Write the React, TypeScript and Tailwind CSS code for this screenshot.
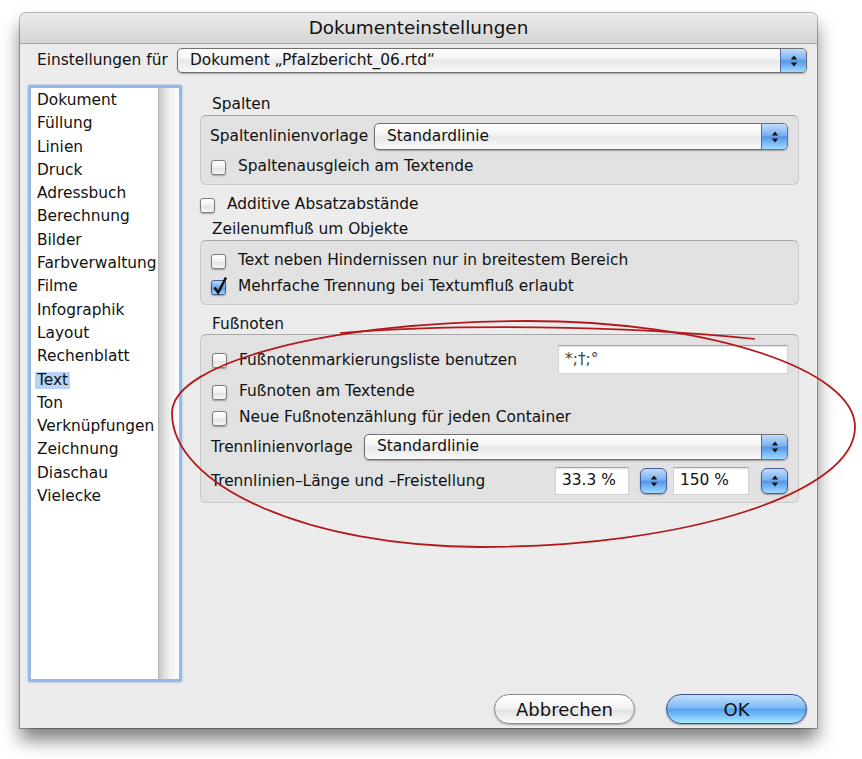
import React from "react";

const ITEMS = [
  "Dokument",
  "Füllung",
  "Linien",
  "Druck",
  "Adressbuch",
  "Berechnung",
  "Bilder",
  "Farbverwaltung",
  "Filme",
  "Infographik",
  "Layout",
  "Rechenblatt",
  "Text",
  "Ton",
  "Verknüpfungen",
  "Zeichnung",
  "Diaschau",
  "Vielecke",
];

function Arrows() {
  return (
    <svg width="8" height="14" viewBox="0 0 8 14">
      <path d="M4 1.5 L7.2 5.6 L0.8 5.6 Z" fill="#111" />
      <path d="M0.8 8.4 L7.2 8.4 L4 12.5 Z" fill="#111" />
    </svg>
  );
}

function Popup({ label, className }: { label: string; className: string }) {
  return (
    <div
      className={`flex overflow-hidden rounded-[5px] border border-[#707070] bg-[linear-gradient(#ffffff,#f5f5f5_40%,#e8e8e8_52%,#f8f8f8)] shadow-[0_1px_1.5px_rgba(0,0,0,0.3)] ${className}`}
    >
      <div className="flex flex-1 items-center pl-[12px]">{label}</div>
      <div className="flex w-[26px] items-center justify-center rounded-r-[4px] border-l border-[#4e6ea8] bg-[linear-gradient(#c2dbfa,#7bb1f0_45%,#5596ea_52%,#9fdaff)]">
        <Arrows />
      </div>
    </div>
  );
}

function Stepper() {
  return (
    <div className="flex h-[26px] w-[27px] shrink-0 items-center justify-center rounded-[6px] border border-[#3f5f9e] bg-[linear-gradient(#c2dbfa,#7bb1f0_45%,#5596ea_52%,#9fdaff)] shadow-[0_1px_1.5px_rgba(0,0,0,0.3)]">
      <Arrows />
    </div>
  );
}

function Check({ checked = false }: { checked?: boolean }) {
  return (
    <div
      className={
        checked
          ? "relative h-[15px] w-[15px] shrink-0 rounded-[3px] border border-[#3d5d98] bg-[linear-gradient(#bcd9fa,#6aa6ee_50%,#4e92e8_52%,#a2dcff)] shadow-[0_1px_1.5px_rgba(0,0,0,0.3)]"
          : "relative h-[15px] w-[15px] shrink-0 rounded-[3px] border border-[#7e7e7e] bg-[linear-gradient(#ffffff,#f1f1f1_50%,#e0e0e0_52%,#f8f8f8)] shadow-[0_1px_1.5px_rgba(0,0,0,0.3)]"
      }
    >
      {checked && (
        <svg className="absolute left-[0px] top-[-5px]" width="16" height="19" viewBox="0 0 16 19">
          <path d="M2.5 11.5 L6.2 16.5 L14 1.5" fill="none" stroke="#111" strokeWidth="2.6" />
        </svg>
      )}
    </div>
  );
}

function CheckRow({
  label,
  checked,
  className = "",
}: {
  label: string;
  checked?: boolean;
  className?: string;
}) {
  return (
    <div className={`flex h-[16px] items-center ${className}`}>
      <Check checked={checked} />
      <span className="ml-[12px] whitespace-nowrap">{label}</span>
    </div>
  );
}

function Group({ className, children }: { className: string; children: React.ReactNode }) {
  return (
    <div
      className={`flex flex-col rounded-[6px] border border-[#c8c8c8] border-t-[#a6a6a6] bg-[rgba(0,0,0,0.04)] ${className}`}
    >
      {children}
    </div>
  );
}

function Field({ value, className }: { value: string; className: string }) {
  return (
    <div
      className={`flex items-center border border-[#d4d4d4] border-t-[#a8a8a8] bg-white pl-[6px] shadow-[inset_0_1px_1px_rgba(0,0,0,0.12)] ${className}`}
    >
      {value}
    </div>
  );
}

export default function App() {
  return (
    <div className="relative h-[759px] w-[862px] overflow-hidden bg-white font-['DejaVu_Sans',sans-serif] text-[15.4px] text-[#111]">
      <div className="ml-[20px] mt-[13px] flex h-[715px] w-[797px] flex-col rounded-t-[6px] bg-[#ececec] bg-[repeating-linear-gradient(180deg,#eeeeee_0px,#eeeeee_1px,#e9e9e9_1px,#e9e9e9_2px)] shadow-[0_0_0_1px_rgba(0,0,0,0.28),0_12px_18px_rgba(0,0,0,0.5)]">
        {/* title bar */}
        <div className="flex h-[31px] shrink-0 items-center justify-center rounded-t-[6px] border-b border-[#a2a2a2] bg-[linear-gradient(#ebebeb,#d5d5d5)] pb-[1px] text-[18.4px]">
          Dokumenteinstellungen
        </div>

        <div className="flex flex-1 flex-col pl-[8px] pr-[10px]">
          <div className="mt-[4px] flex h-[25px] items-center pl-[9px]">
            <span>Einstellungen für</span>
            <Popup label="Dokument „Pfalzbericht_06.rtd“" className="ml-auto h-[25px] w-[630px]" />
          </div>

          <div className="mt-[12px] flex">
            {/* category list */}
            <div className="flex h-[597px] w-[154px] shrink-0 rounded-[2px] border-[3px] border-[#93b9e6] bg-white shadow-[0_0_2px_#7aa7dc]">
              <div className="flex flex-1 flex-col pl-[4px] pt-[1px] leading-[23.3px]">
                {ITEMS.map((it) => (
                  <div key={it}>
                    <span
                      className={
                        it === "Text"
                          ? "inline-block bg-[#b7d3f7] px-[2px] leading-[17px]"
                          : "inline-block px-[2px]"
                      }
                    >
                      {it}
                    </span>
                  </div>
                ))}
              </div>
              <div className="w-[21px] border-l border-[#b5b5b5] bg-[linear-gradient(90deg,#c6c6c6,#e2e2e2_30%,#f3f3f3_60%,#fbfbfb)]" />
            </div>

            {/* settings panel */}
            <div className="ml-[18px] flex w-[599px] flex-col">
              <div className="mt-[10px] h-[18px] pl-[12px] leading-[18px]">Spalten</div>
              <Group className="mt-[2px] h-[70px] pl-[10px] pr-[10px] pt-[7px]">
                <div className="flex h-[27px] items-center">
                  <span className="-ml-[1px]">Spaltenlinienvorlage</span>
                  <Popup label="Standardlinie" className="ml-auto h-[27px] w-[414px]" />
                </div>
                <CheckRow label="Spaltenausgleich am Textende" className="mt-[9px]" />
              </Group>

              <CheckRow label="Additive Absatzabstände" className="mt-[12px]" />

              <div className="mt-[7px] h-[18px] pl-[12px] leading-[18px]">Zeilenumfluß um Objekte</div>
              <Group className="mt-[2px] h-[65px] pl-[10px] pr-[10px] pt-[12px]">
                <CheckRow label="Text neben Hindernissen nur in breitestem Bereich" />
                <CheckRow label="Mehrfache Trennung bei Textumfluß erlaubt" checked className="mt-[10px]" />
              </Group>

              <div className="mt-[10px] h-[18px] pl-[12px] leading-[18px]">Fußnoten</div>
              <Group className="mt-[1px] h-[169px] pl-[11px] pr-[10px] pt-[10px]">
                <div className="flex h-[29px] items-center">
                  <CheckRow label="Fußnotenmarkierungsliste benutzen" className="mt-[2px]" />
                  <Field value="*;†;°" className="ml-auto h-[29px] w-[230px] text-[#444]" />
                </div>
                <CheckRow label="Fußnoten am Textende" className="mt-[10px]" />
                <CheckRow label="Neue Fußnotenzählung für jeden Container" className="mt-[10px]" />
                <div className="mt-[8px] flex h-[26px] items-center">
                  <span className="-ml-[1px] mt-[2px]">Trennlinienvorlage</span>
                  <Popup label="Standardlinie" className="ml-auto h-[26px] w-[424px]" />
                </div>
                <div className="mt-[7px] flex h-[28px] items-center">
                  <span className="-ml-[1px] mt-[2px]">Trennlinien–Länge und –Freistellung</span>
                  <div className="ml-auto flex items-center">
                    <Field value="33.3 %" className="h-[28px] w-[74px]" />
                    <div className="ml-[11px]">
                      <Stepper />
                    </div>
                    <Field value="150 %" className="ml-[6px] h-[28px] w-[76px]" />
                    <div className="ml-[12px]">
                      <Stepper />
                    </div>
                  </div>
                </div>
              </Group>
            </div>
          </div>

          <div className="mt-[12px] flex justify-end gap-[31px]">
            <button className="flex h-[30px] w-[141px] items-center justify-center rounded-full border border-[#8a8a8a] bg-[linear-gradient(#ffffff,#f4f4f4_45%,#e2e2e2_55%,#fbfbfb)] text-[18px] shadow-[0_1px_2px_rgba(0,0,0,0.3)]">
              Abbrechen
            </button>
            <button className="flex h-[30px] w-[141px] items-center justify-center rounded-full border border-[#3a4f9a] bg-[linear-gradient(#c3e0fc,#7dbaf3_45%,#55a3ef_52%,#a9e6ff)] text-[18px] shadow-[0_1px_2px_rgba(0,0,0,0.35)]">
              OK
            </button>
          </div>
        </div>
      </div>

      {/* hand-drawn red marking over the footnote section */}
      <svg
        className="pointer-events-none absolute left-0 top-0"
        width="862"
        height="759"
        viewBox="0 0 862 759"
      >
        <path
          d="M172 413 C172 362, 332 321, 527 321 C707 321, 855 369, 855 427 C855 493, 686 547, 480 547 C311 547, 172 487, 172 413 Z"
          fill="none"
          stroke="#b3191c"
          strokeWidth="1.8"
        />
        <path d="M340 333 C450 324, 620 325, 755 339" fill="none" stroke="#b3191c" strokeWidth="1.6" />
      </svg>
    </div>
  );
}
